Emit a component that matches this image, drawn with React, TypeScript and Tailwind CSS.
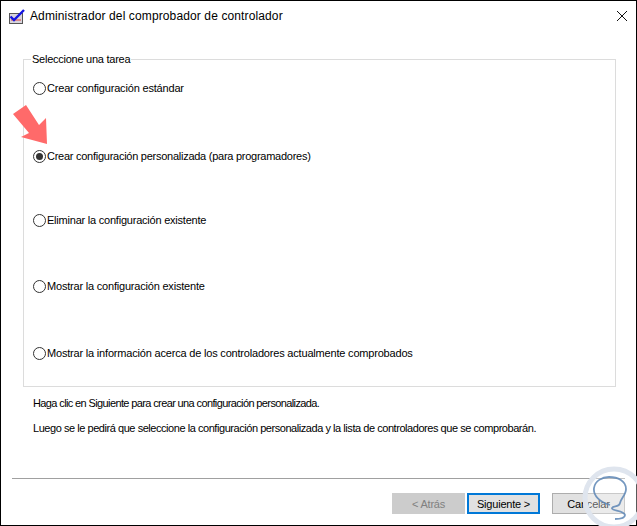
import React from 'react';

const options = [
  { label: 'Crear configuración estándar', gap: 'mt-[12px] tracking-[-0.18px]' },
  { label: 'Crear configuración personalizada (para programadores)', gap: 'mt-[50px] tracking-[-0.26px]', checked: true },
  { label: 'Eliminar la configuración existente', gap: 'mt-[46px] tracking-[-0.22px]' },
  { label: 'Mostrar la configuración existente', gap: 'mt-[48px] tracking-[-0.2px]' },
  { label: 'Mostrar la información acerca de los controladores actualmente comprobados', gap: 'mt-[49px] tracking-[-0.19px]' },
];

const App = () => {
  return (
    <div className="relative h-[526px] w-[637px] overflow-hidden bg-white font-['Liberation_Sans',sans-serif] text-[11px] leading-[18px] text-black">
      <div className="flex h-[526px] w-[637px] flex-col border border-black">
        {/* Title bar */}
        <div className="flex h-[30px] items-center pl-[8px] pr-[9px]">
          <svg width="16" height="16" viewBox="0 0 16 16" className="mt-[1px] shrink-0">
            <rect x="0.5" y="4.5" width="13" height="10" fill="#d8d4dc" stroke="#555" />
            <rect x="2" y="10" width="10" height="2" fill="#d98a8a" />
            <path d="M1.5 7.5 L5 11 L15 1" fill="none" stroke="#1414e0" strokeWidth="2.4" />
          </svg>
          <span className="ml-[5px] flex-1 text-[12px] tracking-[0.12px]">Administrador del comprobador de controlador</span>
          <svg width="10" height="10" viewBox="0 0 10 10">
            <path d="M0 0 L10 10 M10 0 L0 10" stroke="#111" strokeWidth="1" />
          </svg>
        </div>

        {/* Task group */}
        <fieldset className="ml-[22px] mt-[20px] h-[336px] w-[593px] border border-[#dcdcdc] pl-[9px]">
          <legend className="ml-[-2px] px-[1px] leading-[16px] tracking-[-0.25px]">Seleccione una tarea</legend>
          <div className="flex flex-col">
            {options.map((o) => (
              <label key={o.label} className={`flex items-center gap-[1px] ${o.gap}`}>
                <span className="flex h-[13px] w-[13px] shrink-0 items-center justify-center rounded-full border border-[#333] bg-white">
                  {o.checked && <span className="h-[7px] w-[7px] rounded-full bg-[#333]" />}
                </span>
                <span>{o.label}</span>
              </label>
            ))}
          </div>
        </fieldset>

        {/* Help text */}
        <p className="ml-[32px] mt-[7px] tracking-[-0.62px]">Haga clic en Siguiente para crear una configuración personalizada.</p>
        <p className="ml-[32px] mt-[7px] tracking-[-0.45px]">Luego se le pedirá que seleccione la configuración personalizada y la lista de controladores que se comprobarán.</p>

        <div className="ml-[11px] mr-[11px] mt-[41px] h-px bg-[#a0a0a0]" />

        {/* Buttons */}
        <div className="mt-[14px] flex justify-end pr-[11px] tracking-[-0.2px]">
          <button className="h-[21px] w-[73px] bg-[#cccccc] text-[#808080]">&lt; Atrás</button>
          <button className="ml-[2px] h-[21px] w-[73px] border-2 border-[#0078d7] bg-[#e1e1e1]">Siguiente &gt;</button>
          <button className="ml-[12px] h-[21px] w-[73px] border border-[#adadad] bg-[#e1e1e1]">Cancelar</button>
        </div>
      </div>

      {/* Red arrow annotation */}
      <svg className="absolute left-[13px] top-[105px]" width="36" height="42" viewBox="0 0 36 42">
        <path d="M13 0 L0 9 L16 28 L8 32 L34 39 L33 13 L26 20 Z" fill="#ff6a6a" />
      </svg>

      {/* Watermark logo */}
      <svg className="absolute left-[580px] top-[466px]" width="57" height="60" viewBox="0 0 57 60" fill="none">
        <circle cx="34" cy="32" r="29" stroke="#dfe5ee" strokeWidth="5" fill="#ffffff" fillOpacity="0.35" />
        <path d="M30 39 C20 36 13 30 14 22 C15 15 22 11 29 11 C38 11 46 15 46 23 C46 29 41 32 40 37 C39 42 33 39 32 42 C31 45 44 44 45 49 C45 53 38 53 35 53" stroke="#5d86b5" strokeWidth="1.8" strokeOpacity="0.85" />
      </svg>
    </div>
  );
};

export default App;
